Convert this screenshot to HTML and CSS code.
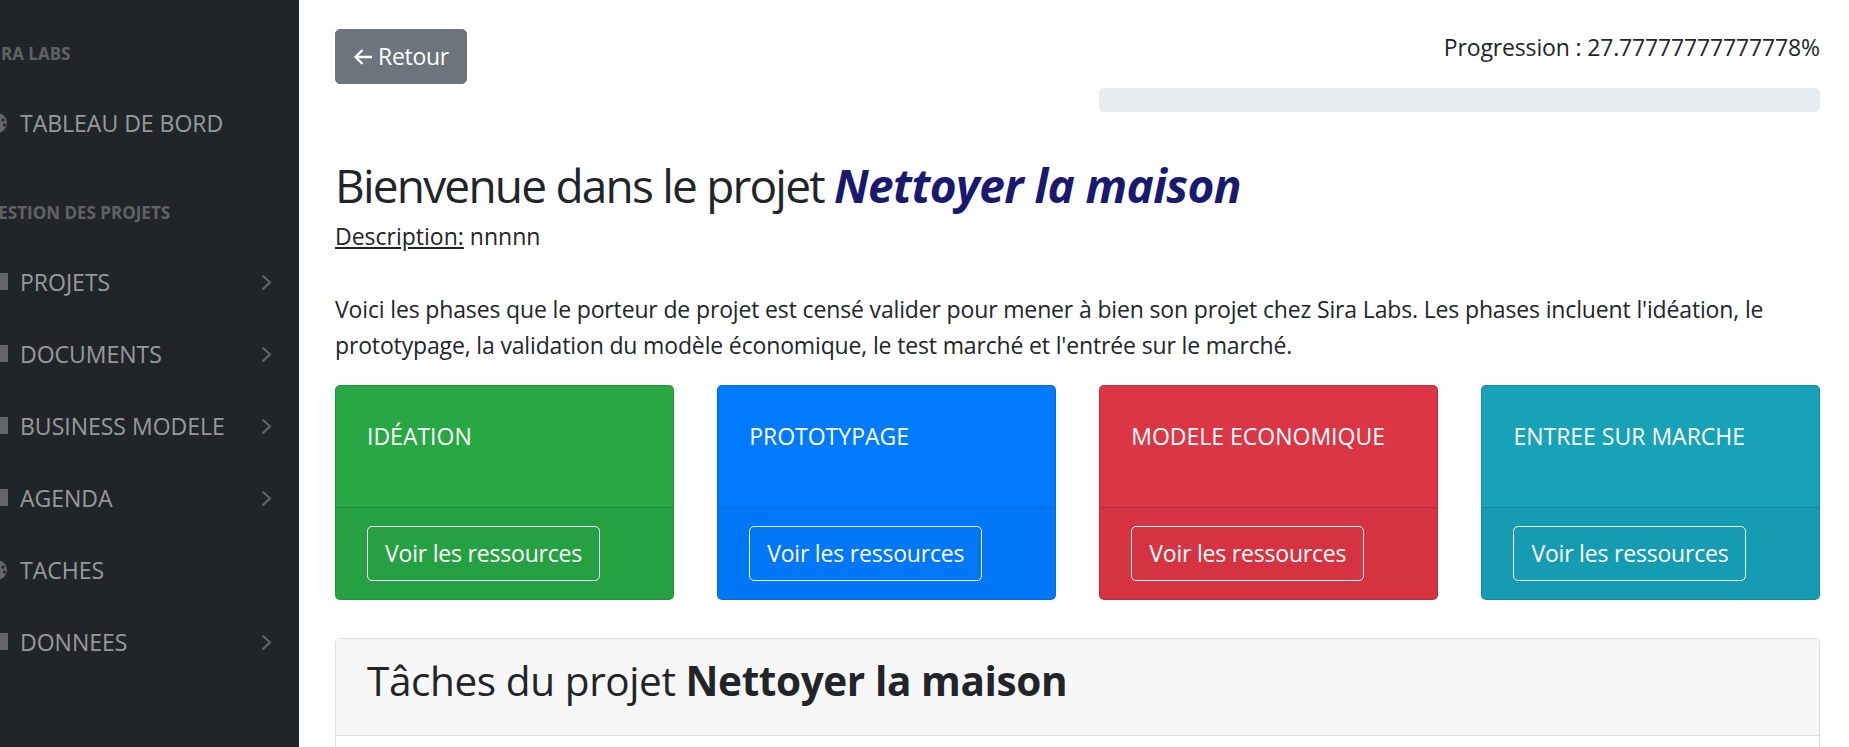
FILE: index.html
```html
<!DOCTYPE html>
<html lang="fr">
<head>
<meta charset="utf-8">
<title>Projet - Sira Labs</title>
<link rel="stylesheet" href="styles.css">
</head>
<body>
<div class="layout">
  <nav class="sidebar">
    <div class="nav-inner">
      <div class="nav-heading">Sira Labs</div>
      <a class="nav-link" href="#">
        <span class="ico"><svg width="22" height="20" viewBox="0 0 22 20"><circle cx="11" cy="10" r="10" fill="currentColor"/><circle cx="17" cy="7" r="1.6" fill="#212529"/><circle cx="18.5" cy="12" r="1.6" fill="#212529"/></svg></span>
        <span class="lbl">Tableau de bord</span>
      </a>
      <div class="nav-heading">Gestion des projets</div>
      <a class="nav-link" href="#">
        <span class="ico"><svg width="22" height="18" viewBox="0 0 22 18"><rect x="0" y="0" width="10" height="17" fill="currentColor"/><rect x="12" y="0" width="10" height="17" rx="1" fill="currentColor"/></svg></span>
        <span class="lbl">Projets</span>
        <span class="chev"><svg width="11" height="17" viewBox="0 0 11 17"><path d="M1.5 1.5 L9 8.5 L1.5 15.5" fill="none" stroke="currentColor" stroke-width="2"/></svg></span>
      </a>
      <a class="nav-link" href="#">
        <span class="ico"><svg width="22" height="18" viewBox="0 0 22 18"><rect x="0" y="0" width="10" height="17" fill="currentColor"/><rect x="12" y="0" width="10" height="17" rx="1" fill="currentColor"/></svg></span>
        <span class="lbl">Documents</span>
        <span class="chev"><svg width="11" height="17" viewBox="0 0 11 17"><path d="M1.5 1.5 L9 8.5 L1.5 15.5" fill="none" stroke="currentColor" stroke-width="2"/></svg></span>
      </a>
      <a class="nav-link" href="#">
        <span class="ico"><svg width="22" height="18" viewBox="0 0 22 18"><rect x="0" y="0" width="10" height="17" fill="currentColor"/><rect x="12" y="0" width="10" height="17" rx="1" fill="currentColor"/></svg></span>
        <span class="lbl">Business modele</span>
        <span class="chev"><svg width="11" height="17" viewBox="0 0 11 17"><path d="M1.5 1.5 L9 8.5 L1.5 15.5" fill="none" stroke="currentColor" stroke-width="2"/></svg></span>
      </a>
      <a class="nav-link" href="#">
        <span class="ico"><svg width="22" height="18" viewBox="0 0 22 18"><rect x="0" y="0" width="10" height="17" fill="currentColor"/><rect x="12" y="0" width="10" height="17" rx="1" fill="currentColor"/></svg></span>
        <span class="lbl">Agenda</span>
        <span class="chev"><svg width="11" height="17" viewBox="0 0 11 17"><path d="M1.5 1.5 L9 8.5 L1.5 15.5" fill="none" stroke="currentColor" stroke-width="2"/></svg></span>
      </a>
      <a class="nav-link" href="#">
        <span class="ico"><svg width="22" height="20" viewBox="0 0 22 20"><circle cx="11" cy="10" r="10" fill="currentColor"/><circle cx="17" cy="7" r="1.6" fill="#212529"/><circle cx="18.5" cy="12" r="1.6" fill="#212529"/></svg></span>
        <span class="lbl">Taches</span>
      </a>
      <a class="nav-link" href="#">
        <span class="ico"><svg width="22" height="18" viewBox="0 0 22 18"><rect x="0" y="0" width="10" height="17" fill="currentColor"/><rect x="12" y="0" width="10" height="17" rx="1" fill="currentColor"/></svg></span>
        <span class="lbl">Donnees</span>
        <span class="chev"><svg width="11" height="17" viewBox="0 0 11 17"><path d="M1.5 1.5 L9 8.5 L1.5 15.5" fill="none" stroke="currentColor" stroke-width="2"/></svg></span>
      </a>
    </div>
  </nav>

  <main class="main">
    <div class="top-row">
      <div class="top-left">
        <a class="btn btn-back" href="#"><svg class="arrow" width="20" height="18" viewBox="0 0 20 18"><path d="M19 9 H2.5 M9.5 2 L2.5 9 L9.5 16" fill="none" stroke="currentColor" stroke-width="2.3"/></svg>Retour</a>
      </div>
      <div class="top-right">
        <div class="progress-label">Progression : 27.77777777777778%</div>
        <div class="progress"><div class="progress-bar"></div></div>
      </div>
    </div>

    <h2 class="page-title">Bienvenue dans le projet <em class="project-name">Nettoyer la maison</em></h2>
    <p class="desc"><u>Description:</u> nnnnn</p>

    <p class="intro">Voici les phases que le porteur de projet est censé valider pour mener à bien son projet chez Sira Labs. Les phases incluent l'idéation, le prototypage, la validation du modèle économique, le test marché et l'entrée sur le marché.</p>

    <div class="phases">
      <div class="phase phase-green">
        <div class="phase-body">IDÉATION</div>
        <div class="phase-footer"><a class="btn btn-outline" href="#">Voir les ressources</a></div>
      </div>
      <div class="phase phase-blue">
        <div class="phase-body">PROTOTYPAGE</div>
        <div class="phase-footer"><a class="btn btn-outline" href="#">Voir les ressources</a></div>
      </div>
      <div class="phase phase-red">
        <div class="phase-body">MODELE ECONOMIQUE</div>
        <div class="phase-footer"><a class="btn btn-outline" href="#">Voir les ressources</a></div>
      </div>
      <div class="phase phase-teal">
        <div class="phase-body">ENTREE SUR MARCHE</div>
        <div class="phase-footer"><a class="btn btn-outline" href="#">Voir les ressources</a></div>
      </div>
    </div>

    <div class="tasks-card">
      <div class="tasks-header">
        <h3 class="tasks-title">Tâches du projet <strong>Nettoyer la maison</strong></h3>
      </div>
      <div class="tasks-body"></div>
    </div>
  </main>
</div>
</body>
</html>
```

FILE: styles.css
```css
* { box-sizing: border-box; }

html, body {
  margin: 0;
  padding: 0;
  height: 100%;
  overflow: hidden;
}

body {
  font-family: "Open Sans", "Noto Sans", sans-serif;
  font-size: 23px;
  line-height: 35px;
  color: #212529;
  background: #fff;
}

a { text-decoration: none; }

.layout {
  display: flex;
  height: 747px;
}

/* Sidebar */
.sidebar {
  width: 299px;
  flex: 0 0 299px;
  background: #212529;
  overflow: hidden;
}

.nav-inner {
  margin-left: -37px;
  width: 336px;
}

.nav-heading {
  padding: 41px 23px 20px;
  font-size: 17px;
  line-height: 26px;
  font-weight: 700;
  text-transform: uppercase;
  color: rgba(255, 255, 255, 0.3);
  white-space: nowrap;
}

.nav-link {
  display: flex;
  align-items: center;
  height: 72px;
  padding: 0 27px 0 23px;
  color: rgba(255, 255, 255, 0.55);
  text-transform: uppercase;
  white-space: nowrap;
}

.nav-link .ico {
  width: 22px;
  flex: 0 0 22px;
  margin-right: 12px;
  display: flex;
  align-items: center;
  color: rgba(255, 255, 255, 0.3);
}

.nav-link .chev {
  margin-left: auto;
  display: flex;
  align-items: center;
  color: rgba(255, 255, 255, 0.3);
}

/* Main */
.main {
  flex: 1;
  padding: 29px 29px 0 36px;
  min-width: 0;
}

.top-row {
  display: grid;
  grid-template-columns: 1fr 1fr;
  column-gap: 43.5px;
  align-items: start;
}

.btn {
  display: inline-flex;
  align-items: center;
  border-radius: 5px;
  font-size: 23px;
  line-height: 35px;
  padding: 9px 17px;
  border: 1px solid transparent;
  white-space: nowrap;
}

.btn-back {
  background: #6c757d;
  border-color: #6c757d;
  color: #fff;
  letter-spacing: -0.3px;
}

.btn-back .arrow {
  margin-right: 5px;
}

.top-right {
  padding-top: 1px;
}

.progress-label {
  text-align: right;
  letter-spacing: -0.15px;
}

.progress {
  margin-top: 23px;
  height: 24px;
  background: #e9ecef;
  border-radius: 5px;
  overflow: hidden;
}

.progress-bar {
  width: 0;
  height: 100%;
  background: #007bff;
}

.page-title {
  margin: 45px 0 6px;
  font-size: 46px;
  line-height: 56px;
  font-weight: 400;
  letter-spacing: -1.8px;
}

.project-name {
  font-weight: 700;
  font-style: italic;
  color: #191970;
  letter-spacing: -0.6px;
}

.desc {
  margin: 0 0 37px;
}

.intro {
  margin: 0 0 22px;
  line-height: 36px;
  letter-spacing: -0.15px;
}

.phases {
  display: grid;
  grid-template-columns: repeat(4, 1fr);
  column-gap: 43.5px;
}

.phase {
  border-radius: 5px;
  color: #fff;
  overflow: hidden;
  border: 1px solid rgba(0, 0, 0, 0.125);
}

.phase-green { background: #28a745; }
.phase-blue { background: #007bff; }
.phase-red { background: #dc3545; }
.phase-teal { background: #17a2b8; }

.phase-body {
  padding: 33px 31px 53px;
}

.phase-footer {
  padding: 18px 31px;
  background: rgba(0, 0, 0, 0.03);
  border-top: 1px solid rgba(0, 0, 0, 0.125);
}

.btn-outline {
  color: #fff;
  border-color: #f8f9fa;
  letter-spacing: -0.2px;
}

.tasks-card {
  margin-top: 38px;
  border: 1px solid #dfdfdf;
  border-radius: 5px;
  overflow: hidden;
}

.tasks-header {
  background: #f7f7f7;
  padding: 17px 31px;
  border-bottom: 1px solid #dfdfdf;
}

.tasks-title {
  margin: 0 0 13px;
  font-size: 40.5px;
  line-height: 49px;
  font-weight: 400;
  letter-spacing: -0.4px;
}

.tasks-title strong {
  font-weight: 700;
}

.tasks-body {
  height: 120px;
  background: #fff;
}
```
